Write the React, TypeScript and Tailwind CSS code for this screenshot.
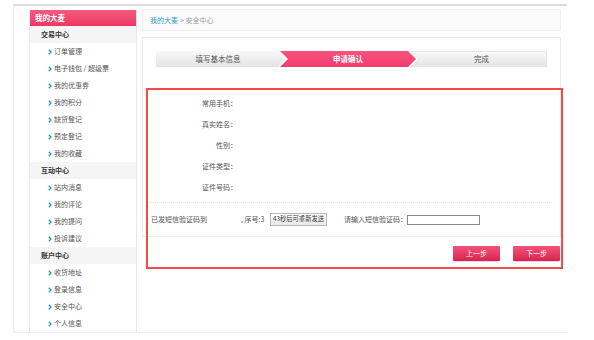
import React from "react";

const font = "font-['Noto_Sans_CJK_SC','Liberation_Sans',sans-serif]";

const menu = [
  { title: "交易中心", items: ["订单管理", "电子钱包 / 超级票", "我的优惠券", "我的积分", "缺货登记", "预定登记", "我的收藏"] },
  { title: "互动中心", items: ["站内消息", "我的评论", "我的提问", "投诉建议"] },
  { title: "账户中心", items: ["收货地址", "登录信息", "安全中心", "个人信息"] },
];

const fields = ["常用手机：", "真实姓名：", "性别：", "证件类型：", "证件号码："];

function Chevron() {
  return (
    <svg width="4" height="6" viewBox="0 0 4 6" className="mr-[2px]">
      <polyline points="0.8,0.8 3,3 0.8,5.2" fill="none" stroke="#1a9fc8" strokeWidth="1.3" />
    </svg>
  );
}

function Sidebar() {
  return (
    <div className="w-[108px] shrink-0 border-x border-[#e4ebef] bg-white">
      <div className="flex h-[16px] items-center bg-gradient-to-b from-[#f65a7f] to-[#ea3863] pl-[5px] text-[7.5px] font-bold leading-none text-white">
        我的大麦
      </div>
      {menu.map((group) => (
        <div key={group.title}>
          <div className="flex h-[17px] items-center bg-[#f5f5f5] pl-[11px] text-[7px] font-bold leading-none text-[#333]">
            {group.title}
          </div>
          {group.items.map((item) => (
            <div key={item} className="flex h-[17px] items-center pl-[18px] text-[7px] leading-none text-[#555]">
              <Chevron />
              {item}
            </div>
          ))}
        </div>
      ))}
    </div>
  );
}

function Steps() {
  return (
    <div className="ml-[13px] flex h-[16px] w-[391px]">
      <div className="relative z-20 -mr-[12px] h-full w-[132px] bg-white [clip-path:polygon(0_0,124px_0,132px_50%,124px_100%,0_100%)]">
        <div className="flex h-full w-[130px] items-center justify-center bg-gradient-to-b from-[#f9f9f9] to-[#e3e3e3] pr-[6px] text-[7.5px] leading-none text-[#555] [clip-path:polygon(0_0,122px_0,130px_50%,122px_100%,0_100%)]">
          填写基本信息
        </div>
      </div>
      <div className="relative z-10 -mr-[8px] h-full w-[142px] bg-white [clip-path:polygon(0_0,134px_0,142px_50%,134px_100%,0_100%)]">
        <div className="flex h-full w-[140px] items-center justify-center bg-gradient-to-b from-[#f8527f] to-[#f03d6f] pl-[4px] text-[7.5px] font-bold leading-none text-white [clip-path:polygon(0_0,132px_0,140px_50%,132px_100%,0_100%)]">
          申请确认
        </div>
      </div>
      <div className="flex h-full w-[137px] items-center justify-center border border-[#e6e6e6] bg-gradient-to-b from-[#f9f9f9] to-[#e3e3e3] pl-[6px] text-[7.5px] leading-none text-[#555]">
        完成
      </div>
    </div>
  );
}

export default function App() {
  return (
    <div className={`relative h-[340px] w-[594px] overflow-hidden bg-white text-[#555] ${font}`}>
      <div className="ml-[13px] mt-[4px] flex w-[554px] items-start border-b border-l border-t-2 border-[#eceff1] border-t-[#dcdcdc] pl-[15px] pt-[4px]">
        <Sidebar />

        <div className="ml-[5px] w-[419px]">
          {/* Breadcrumb */}
          <div className="-mt-[1px] flex h-[22px] items-center border border-[#eeeeee] bg-[#fbfbfb] pl-[7px] text-[7px] leading-none">
            <span className="text-[#2f9bc6]">我的大麦</span>
            <span className="ml-[2px] text-[#999]">&gt; 安全中心</span>
          </div>

          {/* Content */}
          <div className="mt-[6px] border border-[#ececec] pt-[13px]">
            <Steps />

            <div className="mt-[26px]">
              {fields.map((f) => (
                <div key={f} className="flex h-[21px] items-center">
                  <div className="w-[94px] text-right text-[7px] leading-none text-[#555]">{f}</div>
                </div>
              ))}
            </div>

            <div className="mx-[8px] mt-[4px] border-t border-dotted border-[#dddddd]" />

            <div className="flex h-[33px] items-center whitespace-nowrap pl-[8px] text-[7px] leading-none text-[#555]">
              <span className="w-[90px] shrink-0">已发短信验证码到</span>
              <span className="w-[29px] shrink-0">, 序号:3</span>
              <button className="flex h-[13px] w-[57px] shrink-0 items-center justify-center whitespace-nowrap border border-[#b9b9b9] bg-gradient-to-b from-[#ffffff] to-[#e9e9e9] text-[6.3px] leading-none text-[#333]">
                43秒后可重新发送
              </button>
              <span className="ml-[17px] w-[63px] shrink-0">请输入短信验证码：</span>
              <input className="h-[10px] w-[73px] shrink-0 border border-[#8a8a8a] bg-white outline-none" />
            </div>
          </div>

          {/* Buttons */}
          <div className="mt-[9px] flex justify-end gap-[13px] pr-[1px]">
            <button className="flex h-[15px] w-[47px] items-center justify-center rounded-[1px] bg-gradient-to-b from-[#f2527a] to-[#d9204f] text-[7px] leading-none text-white shadow-[0_1px_1px_rgba(0,0,0,0.15)]">
              上一步
            </button>
            <button className="flex h-[15px] w-[47px] items-center justify-center rounded-[1px] bg-gradient-to-b from-[#f2527a] to-[#d9204f] text-[7px] leading-none text-white shadow-[0_1px_1px_rgba(0,0,0,0.15)]">
              下一步
            </button>
          </div>
        </div>
      </div>

      {/* highlight box drawn over the form */}
      <div className="pointer-events-none absolute left-[146px] top-[88px] h-[181px] w-[417px] border-2 border-[#f44a4a]" />
    </div>
  );
}
